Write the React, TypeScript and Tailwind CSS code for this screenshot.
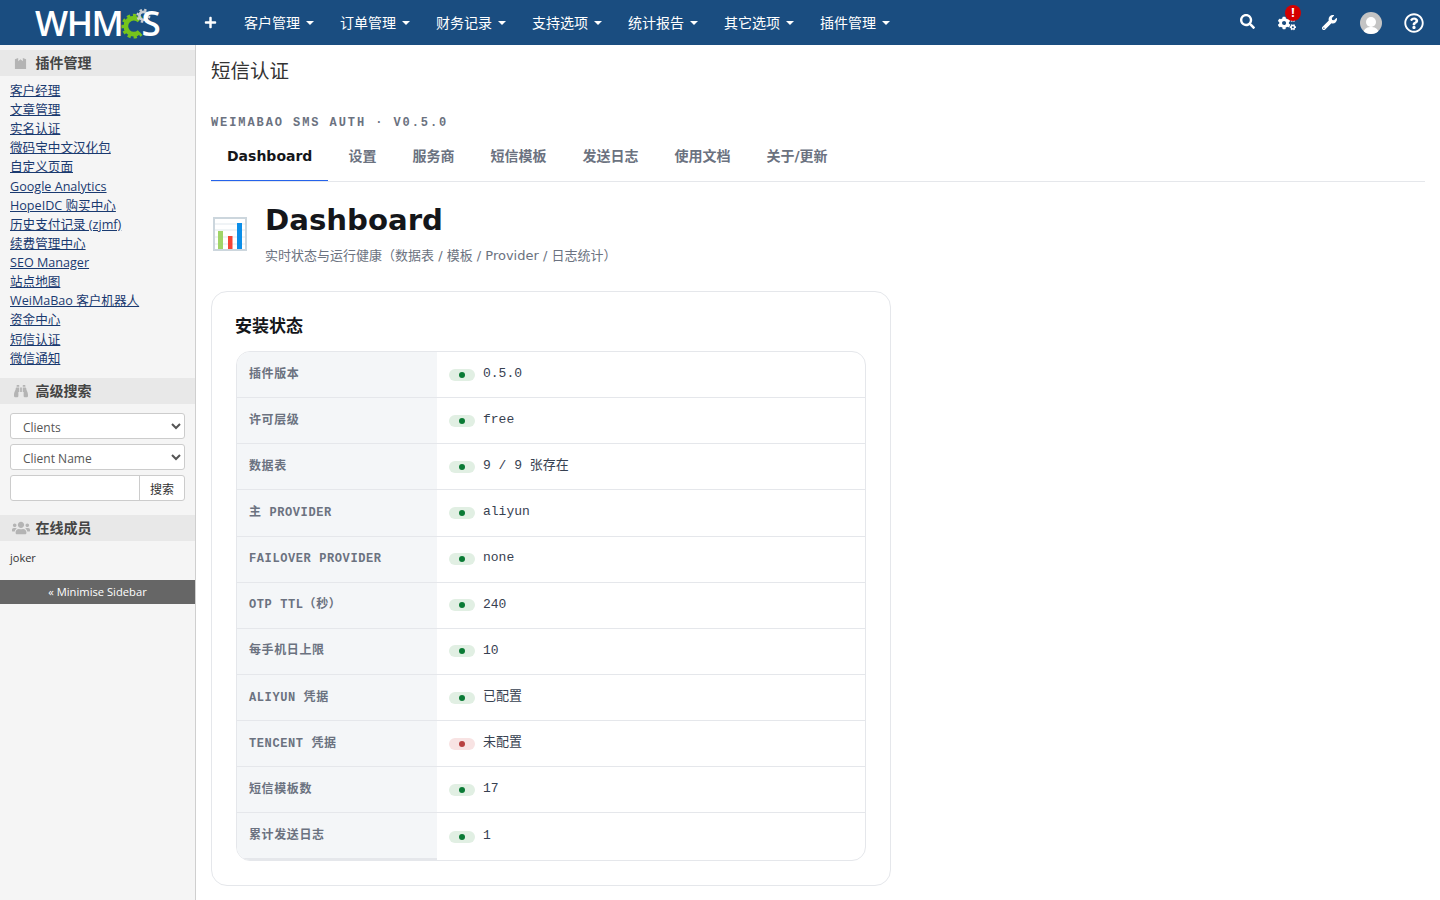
import { FaBinoculars, FaCogs, FaPlus, FaRegQuestionCircle, FaSearch, FaUsers, FaWrench } from 'react-icons/fa';

const cjk = '"Noto Sans CJK SC"';
const navItems = ['客户管理', '订单管理', '财务记录', '支持选项', '统计报告', '其它选项', '插件管理'];
const addonLinks = [
    '客户经理', '文章管理', '实名认证', '微码宝中文汉化包', '自定义页面', 'Google Analytics', 'HopeIDC 购买中心',
    '历史支付记录 (zjmf)', '续费管理中心', 'SEO Manager', '站点地图', 'WeiMaBao 客户机器人', '资金中心', '短信认证', '微信通知',
];
const tabs = ['设置', '服务商', '短信模板', '发送日志', '使用文档', '关于/更新'];
const rows = [
    ['插件版本', '0.5.0', true],
    ['许可层级', 'free', true],
    ['数据表', '9 / 9 张存在', true],
    ['主 PROVIDER', 'aliyun', true],
    ['FAILOVER PROVIDER', 'none', true],
    ['OTP TTL（秒）', '240', true],
    ['每手机日上限', '10', true],
    ['ALIYUN 凭据', '已配置', true],
    ['TENCENT 凭据', '未配置', false],
    ['短信模板数', '17', true],
    ['累计发送日志', '1', true],
] as const;

function Logo() {
    return (
        <div className="flex h-[45px] w-[126px] items-center font-['Open_Sans','Noto_Sans',sans-serif] text-[35px] leading-none font-semibold tracking-[-1.4px] text-white">
            <span>WHM</span>
            <svg viewBox="0 0 40 40" className="ml-[-1px] h-[32px] w-[32px] shrink-0">
                <g fill="none" stroke="#76c41c">
                    <path d="M23.07 16.93A10 10 0 1 0 23.07 31.07" strokeWidth="6" />
                    <path d="M25.5 14.45A13.5 13.5 0 1 0 25.5 33.55" strokeWidth="4" strokeDasharray="4 3.5" />
                </g>
                <g fill="none" stroke="#c9cdd2">
                    <circle cx="28" cy="11" r="5" strokeWidth="3.5" />
                    <circle cx="28" cy="11" r="7.5" strokeWidth="2.5" strokeDasharray="3 2.9" />
                </g>
            </svg>
            <span className="ml-[-12px]">S</span>
        </div>
    );
}

function Caret() {
    return <span className="ml-[6px] inline-block h-0 w-0 border-x-[4px] border-t-[4px] border-x-transparent border-t-white" />;
}

function TopBar() {
    return (
        <header className="flex h-[45px] items-center bg-[#1a4d80] pl-[35px] text-white">
            <Logo />
            <FaPlus className="ml-[43px] h-[13px] w-[13px]" />
            <nav className="ml-[27px] flex gap-[26px] text-[14px]">
                {navItems.map((item) => (
                    <span key={item} className="flex items-center">
                        {item}
                        <Caret />
                    </span>
                ))}
            </nav>
            <div className="ml-auto flex items-center pr-[16px]">
                <FaSearch className="h-[15px] w-[15px] -translate-y-[1px]" />
                <span className="relative ml-[23px]">
                    <FaCogs className="h-[18px] w-[18px]" />
                    <span className="absolute top-[-9px] right-[-5px] flex h-[16px] w-[16px] items-center justify-center rounded-full bg-[#d40000] text-[12px] leading-none font-bold">!</span>
                </span>
                <FaWrench className="ml-[26px] h-[15px] w-[15px]" />
                <span className="relative ml-[23px] h-[22px] w-[22px] overflow-hidden rounded-full bg-[#c4c4c4]">
                    <span className="absolute top-[5px] left-[6px] h-[10px] w-[10px] rounded-full bg-white" />
                    <span className="absolute top-[15px] left-[3px] h-[14px] w-[16px] rounded-full bg-white" />
                </span>
                <FaRegQuestionCircle className="ml-[22px] h-[20px] w-[20px]" />
            </div>
        </header>
    );
}

function SideHeading({ icon, label }: { icon: React.ReactNode; label: string }) {
    return (
        <div className="flex h-[26px] items-center bg-[#e8e8e8] text-[14px] font-bold text-[#444]">
            <span className="flex w-[35px] justify-center pl-[6px] text-[#b4b4b4]">{icon}</span>
            <span className="pb-[1px] pl-[0.5px]">{label}</span>
        </div>
    );
}

function Sidebar() {
    return (
        <aside className="w-[196px] shrink-0 border-r border-r-[#cfcfcf] bg-[#f5f5f5] pt-[5px] font-['Open_Sans','Noto_Sans_CJK_SC',sans-serif] text-[12px] text-[#444]">
            <SideHeading
                label="插件管理"
                icon={
                    <svg viewBox="0 0 14 14" className="h-[13px] w-[13px]" fill="currentColor">
                        <path d="M1 2.5 4.5 1v3.5L7 2.5l2.5 2V1L13 2.5V13H1z" />
                    </svg>
                }
            />
            <ul className="px-[10px] pt-[4.8px] pb-[10.2px] text-[12.6px] text-[#1a3a70] underline">
                {addonLinks.map((link) => (
                    <li key={link} className="h-[19.15px] leading-[19.15px]">{link}</li>
                ))}
            </ul>
            <SideHeading label="高级搜索" icon={<FaBinoculars className="h-[14px] w-[14px]" />} />
            <div className="flex flex-col gap-[5px] px-[10px] pt-[9px] pb-[14px]">
                {['Clients', 'Client Name'].map((option) => (
                    <select key={option} className="h-[26px] w-full rounded-[3px] border border-[#ccc] bg-white pt-[2px] pl-[8px] text-[12px] text-[#555]">
                        <option>{option}</option>
                    </select>
                ))}
                <div className="flex h-[26px] rounded-[3px] border border-[#ccc] bg-white">
                    <input className="min-w-0 flex-1 border-r border-r-[#ccc]" />
                    <span className="flex w-[44px] items-center justify-center pt-[3px] text-[12px] text-[#333]">搜索</span>
                </div>
            </div>
            <SideHeading label="在线成员" icon={<FaUsers className="h-[18px] w-[18px]" />} />
            <p className="px-[10px] pt-[8px] pb-[14px] text-[11px] leading-[17px] text-[#333]">joker</p>
            <div className="flex h-[24px] items-center justify-center bg-[#666] text-[11.2px] text-white">« Minimise Sidebar</div>
        </aside>
    );
}

function ChartIcon() {
    return (
        <svg viewBox="0 0 34 34" className="mt-[2px] h-[34px] w-[34px] shrink-0">
            <rect x="1" y="1" width="32" height="32" fill="#fff" stroke="#ccd6dd" strokeWidth="2" />
            <path d="M2 7h30M2 13h30M2 20h30M2 27h30" stroke="#e1e8ed" />
            <rect x="5" y="14" width="5" height="18" fill="#a0d468" />
            <rect x="15" y="19" width="4.5" height="13" fill="#f44336" />
            <rect x="24" y="6" width="5" height="26" fill="#0b8ee8" />
        </svg>
    );
}

function StatusRow({ label, value, ok, last }: { label: string; value: string; ok: boolean; last: boolean }) {
    return (
        <div className={last ? 'flex h-[46.5px]' : 'flex h-[46.15px]'}>
            <div className={`flex w-[200px] shrink-0 items-center bg-[#f4f6f8] pl-[12px] font-['Liberation_Mono','Noto_Sans_CJK_SC',monospace] text-[12px] leading-[16px] font-bold tracking-[0.6px] text-[#6b7280] ${last ? 'border-b-2 border-b-[#e5e7eb]' : 'border-b border-b-[#e5e7eb]'}`}>
                {label}
            </div>
            <div className={`flex flex-1 items-center pl-[12px] font-['Liberation_Mono','Noto_Sans_CJK_SC',monospace] text-[13px] text-[#374151] ${last ? '' : 'border-b border-b-[#e5e7eb]'}`}>
                <span className={`flex h-[12px] w-[26px] items-center justify-center rounded-full ${ok ? 'bg-[#e1efe3]' : 'bg-[#f8e3e3]'}`}>
                    <span className={`h-[6px] w-[6px] rounded-full ${ok ? 'bg-[#0a7a35]' : 'bg-[#b84040]'}`} />
                </span>
                <span className="ml-[8px] pb-[2px]">{value}</span>
            </div>
        </div>
    );
}

function Content() {
    return (
        <main className={`min-w-0 flex-1 px-[15px] font-['DejaVu_Sans','Noto_Sans_CJK_SC',sans-serif]`}>
            <h1 className="pt-[13px] text-[19.5px] leading-[28px] font-normal text-[#333]">短信认证</h1>
            <p className="mt-[29px] font-['Liberation_Mono',monospace] text-[12px] leading-[16px] font-bold tracking-[1.92px] text-[#6b7280]">WEIMABAO SMS AUTH · V0.5.0</p>
            <div className="mt-[1px] flex gap-[4px] border-b border-b-[#e5e7eb] text-[14px] font-semibold text-[#6b7280]">
                <span className="flex h-[49px] items-center border-b border-b-[#2563eb] px-[16px] pt-[1px] font-bold text-[#14161a]">Dashboard</span>
                {tabs.map((tab) => (
                    <span key={tab} className="flex h-[49px] items-center px-[16px]">{tab}</span>
                ))}
            </div>
            <div className="mt-[19px] flex items-center gap-[18px] pl-[2px]">
                <ChartIcon />
                <div>
                    <h2 className="text-[29.2px] leading-[38px] font-bold text-[#14161a]">Dashboard</h2>
                    <p className="mt-[8px] text-[13px] leading-[18px] text-[#6b7280]">实时状态与运行健康（数据表 / 模板 / Provider / 日志统计）</p>
                </div>
            </div>
            <section className="mt-[26px] w-[680px] rounded-[16px] border border-[#e5e7eb] bg-white p-[24px]">
                <h3 className="ml-[-1px] pb-[15px] text-[17px] leading-[20px] font-bold text-[#14161a]">安装状态</h3>
                <div className="overflow-hidden rounded-[14px] border border-[#e5e7eb]">
                    {rows.map(([label, value, ok], i) => (
                        <StatusRow key={label} label={label} value={value} ok={ok} last={i === rows.length - 1} />
                    ))}
                </div>
            </section>
        </main>
    );
}

export default function App() {
    return (
        <div className={`flex h-screen flex-col overflow-hidden bg-white`} style={{ fontFamily: `"Open Sans", ${cjk}, sans-serif` }}>
            <TopBar />
            <div className="flex min-h-0 flex-1">
                <Sidebar />
                <Content />
            </div>
        </div>
    );
}
